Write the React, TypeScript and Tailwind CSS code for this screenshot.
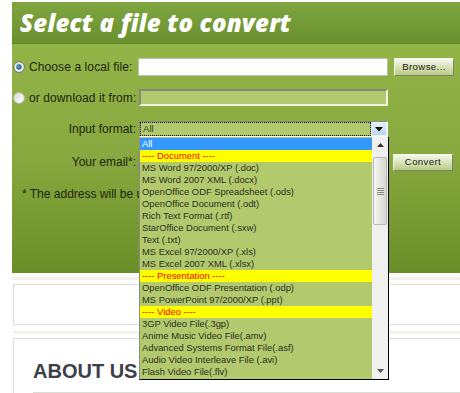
import React from "react";

const formats: { t: string; k?: "sel" | "grp" }[] = [
  { t: "All", k: "sel" },
  { t: "---- Document ----", k: "grp" },
  { t: "MS Word 97/2000/XP (.doc)" },
  { t: "MS Word 2007 XML (.docx)" },
  { t: "OpenOffice ODF Spreadsheet (.ods)" },
  { t: "OpenOffice Document (.odt)" },
  { t: "Rich Text Format (.rtf)" },
  { t: "StarOffice Document (.sxw)" },
  { t: "Text (.txt)" },
  { t: "MS Excel 97/2000/XP (.xls)" },
  { t: "MS Excel 2007 XML (.xlsx)" },
  { t: "---- Presentation ----", k: "grp" },
  { t: "OpenOffice ODF Presentation (.odp)" },
  { t: "MS PowerPoint 97/2000/XP (.ppt)" },
  { t: "---- Video ----", k: "grp" },
  { t: "3GP Video File(.3gp)" },
  { t: "Anime Music Video File(.amv)" },
  { t: "Advanced Systems Format File(.asf)" },
  { t: "Audio Video Interleave File (.avi)" },
  { t: "Flash Video File(.flv)" },
];

function Radio({ checked }: { checked?: boolean }) {
  return (
    <svg width="12" height="12" viewBox="0 0 12 12">
      <defs>
        <linearGradient id={checked ? "r1" : "r2"} x1="0" y1="0" x2="1" y2="1">
          <stop offset="0" stopColor="#d8d8d0" />
          <stop offset="1" stopColor="#ffffff" />
        </linearGradient>
      </defs>
      <circle cx="6" cy="6" r="5.4" fill={`url(#${checked ? "r1" : "r2"})`} stroke={checked ? "#6f7468" : "#b8bcb0"} strokeWidth="1" />
      {checked && <circle cx="6" cy="6" r="2.7" fill="#2d73a8" />}
      {checked && <circle cx="5.5" cy="5.5" r="1" fill="#7fb6dc" />}
    </svg>
  );
}

function XpButton({ children }: { children: React.ReactNode }) {
  return (
    <div className="flex h-full w-full items-center justify-center border border-t-[#f4f7ea] border-l-[#f4f7ea] border-r-[#7d8270] border-b-[#7d8270] bg-linear-to-b from-[#f6f9ec] to-[#b9cc84] text-[9.6px] tracking-[0.4px] text-[#1a1a1a]">
      {children}
    </div>
  );
}

export default function App() {
  return (
    <div className="relative h-[393px] w-[460px] overflow-hidden bg-white font-['Liberation_Sans',Arial,sans-serif]">
      <div className="ml-[12px] mt-[2px]">
        <div className="flex h-[42px] items-center border-b border-[#5f8428] bg-linear-to-b from-[#7fa640] to-[#6a902f] pl-[8px]">
          <h1 className="font-['Open_Sans',sans-serif] text-[24px] font-extrabold italic leading-none tracking-[0.2px] text-white">
            Select a file to convert
          </h1>
        </div>
        <div className="h-[229px] bg-linear-to-b from-[#93b447] via-[#86a83e] to-[#6a8e27] pt-[14px] text-[12px] text-[#1f2414]">
          <div className="flex h-[18px] items-center">
            <div className="flex w-[126px] items-center">
              <div className="w-[17px] pl-[1px]">
                <Radio checked />
              </div>
              <span className="tracking-[0.1px]">Choose a local file:</span>
            </div>
            <div className="h-[18px] w-[250px] border border-[#b9c2a6] bg-white" />
            <div className="ml-[6px] h-[18px] w-[60px]">
              <XpButton>Browse...</XpButton>
            </div>
          </div>

          <div className="mt-[13px] flex h-[17px] items-center">
            <div className="flex w-[127px] items-center">
              <div className="w-[17px] pl-[1px]">
                <Radio />
              </div>
              <span className="tracking-[0.1px]">or download it from:</span>
            </div>
            <div className="h-[17px] w-[249px] border-2 border-t-[#858a7a] border-l-[#858a7a] border-r-[#eef2e2] border-b-[#eef2e2] bg-[#b3c96e]" />
          </div>

          <div className="mt-[15px] flex h-[16px] items-center">
            <div className="w-[127px] pr-[3px] text-right">Input format:</div>
            <div className="relative h-[16px] w-[249px] border border-t-[#8a8f7c] border-l-[#8a8f7c] border-r-white border-b-white bg-[#b3c96e]">
              <div className="flex h-full items-center">
                <div className="flex h-[14px] flex-1 items-center border border-dotted border-black pl-[2px] text-[9.6px] text-[#2c3a18]">
                  All
                </div>
                <div className="flex h-[14px] w-[16px] items-center justify-center border border-[#eaf2fb] bg-linear-to-b from-[#e6f0fc] to-[#bcd6f2]">
                  <svg width="8" height="5" viewBox="0 0 8 5">
                    <path d="M0 0h8L4 4.5z" fill="#111" />
                  </svg>
                </div>
              </div>

              <div className="absolute left-[-1px] top-[15px] z-10 flex h-[243px] w-[250px] border-l border-r border-b border-l-[#8a8f7c] border-r-black border-b-black bg-[#b3c96e]">
                <div className="flex-1 pt-[1px]">
                  {formats.map((f) => (
                    <div
                      key={f.t}
                      className={
                        "h-[12px] overflow-hidden whitespace-nowrap pl-[2px] text-[9.4px] leading-[12px] " +
                        (f.k === "sel"
                          ? "bg-[#3399ff] text-white"
                          : f.k === "grp"
                          ? "bg-[#ffff00] text-[#ff0000]"
                          : "text-[#2a2f20]")
                      }
                    >
                      {f.t}
                    </div>
                  ))}
                </div>
                <div className="flex w-[16px] flex-col items-center bg-[#f0f0ee]">
                  <div className="flex h-[16px] items-center justify-center">
                    <svg width="7" height="4" viewBox="0 0 7 4">
                      <path d="M3.5 0L7 4H0z" fill="#333" />
                    </svg>
                  </div>
                  <div className="mt-[4px] flex h-[68px] w-[14px] items-center justify-center rounded-[2px] border border-[#b8b8b4] bg-linear-to-r from-[#f6f6f4] via-[#e6e6e2] to-[#d6d6d2]">
                    <div className="flex flex-col gap-[1px]">
                      <div className="h-[1px] w-[7px] bg-[#8a8a86]" />
                      <div className="h-[1px] w-[7px] bg-[#8a8a86]" />
                      <div className="h-[1px] w-[7px] bg-[#8a8a86]" />
                      <div className="h-[1px] w-[7px] bg-[#8a8a86]" />
                    </div>
                  </div>
                  <div className="flex-1" />
                  <div className="flex h-[16px] items-center justify-center">
                    <svg width="7" height="4" viewBox="0 0 7 4">
                      <path d="M0 0h7L3.5 4z" fill="#555" />
                    </svg>
                  </div>
                </div>
              </div>
            </div>
          </div>

          <div className="mt-[16px] flex h-[18px] items-center">
            <div className="w-[126px] pr-[2px] text-right">Your email*:</div>
            <div className="h-[18px] w-[250px] border border-[#8a8f7c] bg-[#b3c96e]" />
            <div className="ml-[5px] mt-[1px] h-[17px] w-[60px]">
              <XpButton>Convert</XpButton>
            </div>
          </div>

          {/* the open list lies over the rest of this line */}
          <p className="mt-[16px] pl-[10px] leading-[14px]">* The address will be used to send you the result.</p>
        </div>
      </div>

      <div className="ml-[12px] mt-[4px] h-[3px] bg-[#f2f2ea]" />
      <div className="ml-[13px] mt-[4px] h-[41px] border border-r-0 border-[#dcdcd8]" />
      <div className="ml-[13px] mt-[6px] h-[3px] bg-[#f2f2ea]" />
      <div className="ml-[13px] mt-[4px] h-[60px] border border-r-0 border-b-0 border-[#dcdcd8] pl-[19px] pt-[22px]">
        <h2 className="whitespace-nowrap text-[20px] font-bold leading-none text-[#3d4048]">ABOUT US</h2>
        <div className="mt-[11px] h-[10px] border-l border-t border-[#dcdcd8]" />
      </div>
    </div>
  );
}
